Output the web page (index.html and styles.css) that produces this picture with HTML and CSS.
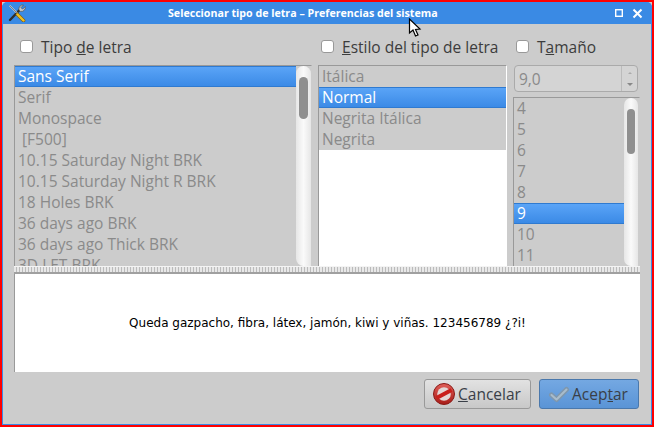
FILE: index.html
```html
<!DOCTYPE html>
<html>
<head>
	<title>Seleccionar tipo de letra</title>
	<meta charset="UTF-8">
	<link rel="stylesheet" href="styles.css">
</head>
<body>
	<div class="window">
		<div class="titlebar">
			<svg class="app-icon" width="18" height="18" viewBox="0 0 18 18">
				<!-- llave -->
				<path d="M2 16 L12.5 5" stroke="#2e2e2e" stroke-width="2.4" stroke-linecap="round"/>
				<path d="M11 6 A4 4 0 0 1 15.5 1 L13 3.6 L14.6 5.2 L17.2 2.6 A4 4 0 0 1 12.4 7.4 Z" fill="#c8c8c8" stroke="#555" stroke-width=".7"/>
				<!-- destornillador -->
				<path d="M1.5 1.5 L10 10" stroke="#d8d8d8" stroke-width="1.6"/>
				<path d="M1.5 1.5 L10 10" stroke="#444" stroke-width=".6"/>
				<path d="M9.5 10.5 L15.5 16.5" stroke="#7a5a10" stroke-width="3.6" stroke-linecap="round"/>
				<path d="M9.5 10.5 L15.5 16.5" stroke="#f0c020" stroke-width="2.4" stroke-linecap="round"/>
			</svg>
			<div class="title">Seleccionar tipo de letra – Preferencias del sistema</div>
			<div class="win-btns">
				<svg width="10" height="10" viewBox="0 0 10 10"><rect x="1.7" y="1.7" width="6.6" height="6.6" fill="none" stroke="#fff" stroke-width="1.4"/></svg>
				<svg width="11" height="11" viewBox="0 0 11 11"><path d="M1.5 1.5 L9.5 9.5 M9.5 1.5 L1.5 9.5" stroke="#fff" stroke-width="2"/></svg>
			</div>
			<svg class="cursor" width="14" height="20" viewBox="0 0 14 20">
				<path d="M1.5 1 L1.5 15 L5 12 L7.5 18 L10 17 L7.5 11.5 L12 11 Z" fill="#fff" stroke="#000" stroke-width="1.2"/>
			</svg>
		</div>
		<div class="content">
			<div class="columns">
				<div class="col col-font">
					<label class="check"><span class="box"></span><span>Tipo <u>d</u>e letra</span></label>
					<div class="list list-font">
						<div class="items">
							<div class="item sel">Sans Serif</div>
							<div class="item">Serif</div>
							<div class="item">Monospace</div>
							<div class="item">&nbsp;[F500]</div>
							<div class="item">10.15 Saturday Night BRK</div>
							<div class="item">10.15 Saturday Night R BRK</div>
							<div class="item">18 Holes BRK</div>
							<div class="item">36 days ago BRK</div>
							<div class="item">36 days ago Thick BRK</div>
							<div class="item">3D LET BRK</div>
						</div>
						<div class="scroll"><div class="thumb"></div></div>
					</div>
				</div>
				<div class="col col-style">
					<label class="check"><span class="box"></span><span><u>E</u>stilo del tipo de letra</span></label>
					<div class="list list-style">
						<div class="items">
							<div class="item">Itálica</div>
							<div class="item sel">Normal</div>
							<div class="item">Negrita Itálica</div>
							<div class="item">Negrita</div>
						</div>
					</div>
				</div>
				<div class="col col-size">
					<label class="check"><span class="box"></span><span>T<u>a</u>maño</span></label>
					<div class="spin">
						<div class="spin-val">9,0</div>
						<div class="spin-arrows"><span class="up"></span><span class="down"></span></div>
					</div>
					<div class="list list-size">
						<div class="items">
							<div class="item">4</div>
							<div class="item">5</div>
							<div class="item">6</div>
							<div class="item">7</div>
							<div class="item">8</div>
							<div class="item sel">9</div>
							<div class="item">10</div>
							<div class="item">11</div>
						</div>
						<div class="scroll"><div class="thumb"></div></div>
					</div>
				</div>
			</div>
			<div class="splitter"></div>
			<div class="preview">Queda gazpacho, fibra, látex, jamón, kiwi y viñas. 123456789 ¿?i!</div>
			<div class="buttons">
				<div class="btn">
					<svg width="24" height="24" viewBox="0 0 24 24">
						<defs>
							<linearGradient id="stop-red" x1="0" y1="0" x2="0" y2="1">
								<stop offset="0" stop-color="#e0605a"/>
								<stop offset="1" stop-color="#a81c18"/>
							</linearGradient>
						</defs>
						<circle cx="12" cy="12" r="10.5" fill="url(#stop-red)" stroke="#8a1a16" stroke-width="1"/>
						<circle cx="12" cy="12" r="6.8" fill="#e4d8d6"/>
						<path d="M4.5 16 L19.5 8" stroke="#c9201c" stroke-width="4"/>
					</svg>
					<span><u>C</u>ancelar</span>
				</div>
				<div class="btn btn-default">
					<svg width="22" height="22" viewBox="0 0 22 22">
						<path d="M3.5 12 L8.5 16.5 L18.5 6.5" fill="none" stroke="#7f97ad" stroke-width="5" stroke-linecap="round" stroke-linejoin="round"/>
						<path d="M3.5 12 L8.5 16.5 L18.5 6.5" fill="none" stroke="#a9bccb" stroke-width="2" stroke-linecap="round" stroke-linejoin="round"/>
					</svg>
					<span>Acep<u>t</u>ar</span>
				</div>
			</div>
		</div>
	</div>
</body>
</html>
```

FILE: styles.css
```css
*{
	margin: 0;
	padding: 0;
	box-sizing: border-box;
}
html,body{
	width: 654px;
	height: 427px;
	overflow: hidden;
}
body{
	border: 2px solid #f00;
	background: #ccc;
	font-family: "Open Sans", "Noto Sans", sans-serif;
	font-size: 15.5px;
	color: #3c3c3c;
}
.window{
	height: 423px;
	display: flex;
	flex-direction: column;
	border: 1px solid #3a8ae4;
	border-top: 0;
	border-radius: 6px 6px 0 0;
}
.titlebar{
	height: 22px;
	flex: none;
	margin: 0 -1px;
	background: #3a8ae4;
	border-radius: 5px 5px 0 0;
	display: flex;
	align-items: center;
	position: relative;
	color: #fff;
}
.app-icon{
	margin-left: 6px;
}
.title{
	position: absolute;
	left: 166px;
	top: 4px;
	font-weight: bold;
	font-size: 10.65px;
	line-height: 14px;
	white-space: nowrap;
}
.win-btns{
	margin-left: auto;
	margin-right: 9px;
	display: flex;
	align-items: center;
	gap: 8px;
}
.cursor{
	position: absolute;
	left: 406px;
	top: 16px;
	z-index: 2;
}
.content{
	flex: 1;
	padding: 0 11px;
	display: flex;
	flex-direction: column;
}
.columns{
	display: flex;
	height: 242px;
}
.col{
	display: flex;
	flex-direction: column;
}
.col-font{
	width: 298px;
}
.col-style{
	width: 189px;
	margin-left: 6px;
}
.col-size{
	width: 127px;
	margin-left: 6px;
}
.check{
	height: 41px;
	flex: none;
	display: flex;
	align-items: center;
	padding-left: 6px;
	padding-top: 4px;
	gap: 8px;
}
.col-style .check,.col-size .check{
	padding-left: 3px;
}
.box{
	width: 13px;
	height: 13px;
	background: #fff;
	border: 1px solid #999;
	border-radius: 3px;
}
.list{
	flex: 1;
	display: flex;
	overflow: hidden;
	border: 1px solid #999;
	border-bottom: 0;
	border-right-color: #ccc;
	color: #8a8a8a;
}
.items{
	flex: 1;
	background: #ccc;
	align-self: stretch;
}
.list-style{
	background: #fff;
	border-right: 1px solid #fff;
}
.list-style .items{
	flex: 1;
	align-self: flex-start;
}
.item{
	height: 21px;
	line-height: 21px;
	padding-left: 3px;
	white-space: nowrap;
}
.sel{
	color: #fff;
	background: linear-gradient(#5aa4f7, #3b8ae6);
	border-top: 1px solid #2f7ad0;
	border-bottom: 1px solid #2f7ad0;
	line-height: 19px;
}
.scroll{
	width: 15px;
	background: linear-gradient(90deg, #e6e6e6, #fafafa 50%, #e6e6e6);
	border-radius: 8px 8px 0 8px;
	padding: 11px 3px 0 3px;
}
.thumb{
	width: 9px;
	height: 42px;
	border-radius: 5px;
	background: #8f8f8f;
}
.spin{
	height: 27px;
	flex: none;
	margin-left: 1px;
	margin-right: 2px;
	display: flex;
	border: 1px solid #aaa;
	border-radius: 4px;
	background: #d4d4d4;
	color: #8a8a8a;
}
.spin-val{
	flex: 1;
	padding-left: 4px;
	line-height: 26px;
	border-right: 1px solid #bbb;
}
.spin-arrows{
	width: 15px;
	display: flex;
	flex-direction: column;
	align-items: center;
	justify-content: center;
	gap: 9px;
}
.up{
	border: 2px solid transparent;
	border-top: 0;
	border-bottom-color: #aaa;
}
.down{
	border: 3px solid transparent;
	border-bottom: 0;
	border-top-color: #888;
}
.list-size{
	margin-top: 5px;
}
.list-size .scroll{
	width: 14px;
	margin-right: 1px;
	padding-top: 11px;
}
.list-size .thumb{
	width: 8px;
	height: 45px;
}
.splitter{
	height: 8px;
	flex: none;
	border-top: 1px solid #f4f4f4;
	border-bottom: 2px solid #a0a0a0;
	background: repeating-linear-gradient(90deg, #e8e8e8 0 2px, #bbb 2px 3px);
}
.preview{
	height: 98px;
	flex: none;
	background: #fff;
	border-left: 1px solid #999;
	display: flex;
	align-items: center;
	justify-content: center;
	font-family: "DejaVu Sans", sans-serif;
	font-size: 12px;
	color: #000;
}
.buttons{
	flex: 1;
	display: flex;
	justify-content: flex-end;
	gap: 8px;
	padding-top: 7px;
	padding-right: 1px;
}
.btn{
	width: 107px;
	height: 30px;
	display: flex;
	align-items: center;
	justify-content: center;
	gap: 2px;
	padding-right: 2px;
	border: 1px solid #999;
	border-radius: 3px;
	background: linear-gradient(#e2e2e2, #c8c8c8);
	color: #3a3f48;
}
.btn-default{
	width: 100px;
	background: linear-gradient(#74a8e2, #5a94d6);
	border-color: #4a78ac;
}
```
